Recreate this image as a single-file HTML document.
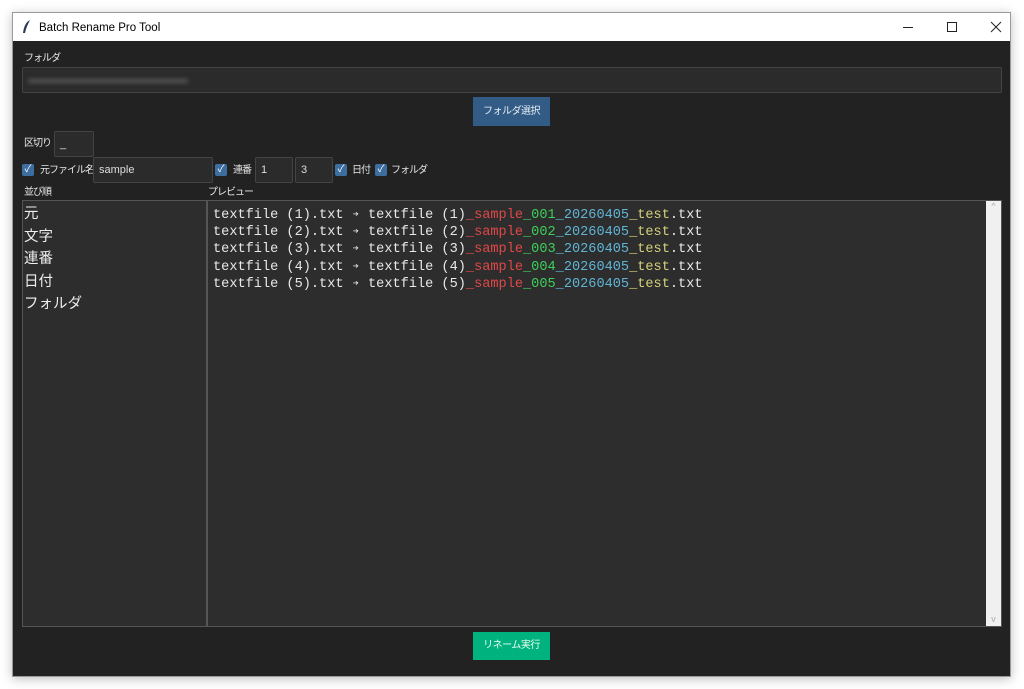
<!DOCTYPE html>
<html><head><meta charset="utf-8"><style>
body{margin:0;width:1024px;height:689px;background:#fff;position:relative;overflow:hidden;font-family:"Liberation Sans","Noto Sans CJK JP",sans-serif}
.a{position:absolute}
.win{left:12px;top:12px;width:999px;height:665px;border:1px solid #9a9a9a;box-sizing:border-box;box-shadow:0 2px 10px rgba(0,0,0,.25);background:#222}
.tb{left:0;top:0;width:997px;height:28px;background:#fff;font-size:12px;color:#000}
.lbl{font-size:10px;color:#e6e6e6;letter-spacing:-1px;white-space:nowrap;line-height:12px}
.ent{background:#2b2b2b;border:1px solid #444;box-sizing:border-box;border-radius:2px;color:#ddd;font-size:11px;padding-left:5px;line-height:24px}
.cb{width:12px;height:12px;background:#3c6fa0;border-radius:2px;color:#fff;font-size:10px;line-height:12px;text-align:center}
.mono{font-family:"Liberation Mono","DejaVu Sans Mono",monospace;font-size:13.6px;line-height:17.2px;color:#e8e8e8;white-space:pre}
.ar{display:inline-block;width:8.16px;text-align:center;font-size:10px;vertical-align:top}
.r{color:#e04848}.g{color:#3ccf5a}.b{color:#5fb5d6}.y{color:#d6d07a}
.btn{font-size:10px;text-align:center;letter-spacing:-0.5px}
</style></head><body>
<div class="a win">
 <div class="a tb">
  <svg class="a" style="left:9px;top:7px" width="10" height="14"><path d="M8 0C4 2 2 6 1 13L3 13C4 8 6 4 8 0Z" fill="#2a3b5a"/></svg>
  <div class="a" style="left:26px;top:8px;font-size:11.5px;line-height:14px">Batch Rename Pro Tool</div>
  <svg class="a" style="left:880px;top:0" width="117" height="28" stroke="#222" fill="none" stroke-width="1"><path d="M10 14.5H20"/><path d="M54.5 9.5h9v9h-9z"/><path d="M98 9l10 10M108 9l-10 10"/></svg>
 </div>
</div>
<div class="a lbl" style="left:24px;top:53px">フォルダ</div>
<div class="a ent" style="left:22px;top:67px;width:980px;height:26px"><span style="display:inline-block;margin-top:11px;width:160px;height:4px;background:#555;filter:blur(2px)"></span></div>
<div class="a btn" style="left:473px;top:97px;width:77px;height:29px;background:#325b85;color:#e6eef6;line-height:29px">フォルダ選択</div>
<div class="a lbl" style="left:24px;top:138px">区切り</div>
<div class="a ent" style="left:54px;top:131px;width:40px;height:26px">_</div>
<div class="a cb" style="left:22px;top:164px">✓</div>
<div class="a lbl" style="left:40px;top:165px">元ファイル名</div>
<div class="a ent" style="left:93px;top:157px;width:120px;height:26px">sample</div>
<div class="a cb" style="left:215px;top:164px">✓</div>
<div class="a lbl" style="left:233px;top:165px">連番</div>
<div class="a ent" style="left:255px;top:157px;width:38px;height:26px">1</div>
<div class="a ent" style="left:295px;top:157px;width:38px;height:26px">3</div>
<div class="a cb" style="left:335px;top:164px">✓</div>
<div class="a lbl" style="left:352px;top:165px">日付</div>
<div class="a cb" style="left:375px;top:164px">✓</div>
<div class="a lbl" style="left:391px;top:165px">フォルダ</div>
<div class="a lbl" style="left:24px;top:187px">並び順</div>
<div class="a lbl" style="left:208px;top:187px">プレビュー</div>
<div class="a" style="left:22px;top:200px;width:185px;height:427px;background:#2d2d2d;border:1px solid #555;box-sizing:border-box;color:#eee;font-size:14.5px;line-height:22.5px;padding:2px 0 0 1px">元<br>文字<br>連番<br>日付<br>フォルダ</div>
<div class="a" style="left:207px;top:200px;width:795px;height:427px;background:#2d2d2d;border:1px solid #555;box-sizing:border-box"></div>
<div class="a" style="left:986px;top:201px;width:15px;height:425px;background:#f0f0f0;color:#aaa;font-size:9px;text-align:center">^<div class="a" style="bottom:2px;width:15px">v</div></div>
<div class="a mono" style="left:213px;top:207px">textfile (1).txt <span class="ar">➔</span> textfile (1)<span class="r">_sample</span><span class="g">_001</span><span class="b">_20260405</span><span class="y">_test</span>.txt
textfile (2).txt <span class="ar">➔</span> textfile (2)<span class="r">_sample</span><span class="g">_002</span><span class="b">_20260405</span><span class="y">_test</span>.txt
textfile (3).txt <span class="ar">➔</span> textfile (3)<span class="r">_sample</span><span class="g">_003</span><span class="b">_20260405</span><span class="y">_test</span>.txt
textfile (4).txt <span class="ar">➔</span> textfile (4)<span class="r">_sample</span><span class="g">_004</span><span class="b">_20260405</span><span class="y">_test</span>.txt
textfile (5).txt <span class="ar">➔</span> textfile (5)<span class="r">_sample</span><span class="g">_005</span><span class="b">_20260405</span><span class="y">_test</span>.txt</div>
<div class="a btn" style="left:473px;top:632px;width:77px;height:28px;background:#00b27d;color:#eafff6;line-height:28px">リネーム実行</div>
</body></html>
